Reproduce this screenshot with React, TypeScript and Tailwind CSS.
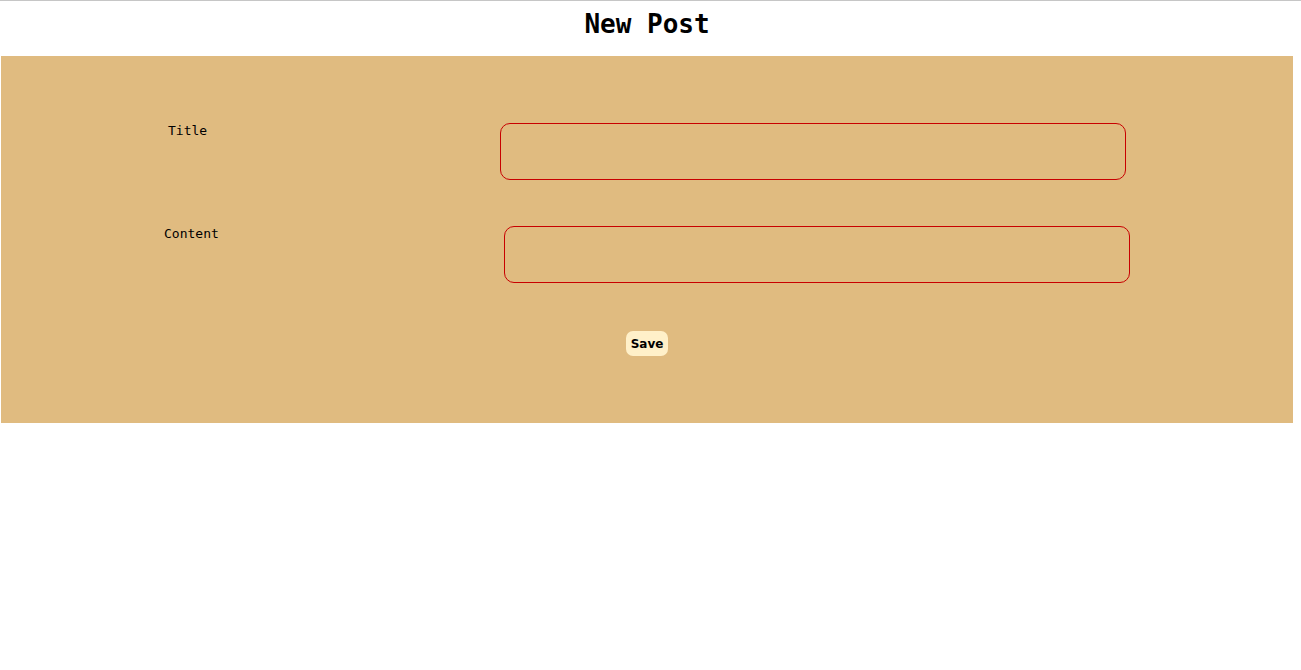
import React from "react";

export default function App() {
  return (
    <div className="min-h-[670px] bg-white border-t border-[#c6c6c6]">
      <div className="w-[1294px]">
        <h1 className="text-center text-[26px] leading-[30px] font-bold pt-[8px] h-[55px] text-black font-['DejaVu_Sans_Mono',monospace]">
          New Post
        </h1>
        <div className="ml-[1px] w-[1292px] h-[367px] bg-[#e0bb80] pt-[67px] font-['DejaVu_Sans_Mono',monospace] text-[13px] text-black">
          <div className="flex items-start">
            <div className="pl-[167px] w-[499px] leading-[15px]">Title</div>
            <div className="w-[626px] h-[57px] border border-[#c80000] rounded-[10px]" />
          </div>
          <div className="flex items-start mt-[46px]">
            <div className="pl-[163px] w-[503px] leading-[15px]">Content</div>
            <div className="w-[626px] h-[57px] border border-[#c80000] rounded-[10px]" />
          </div>
          <div className="flex justify-center mt-[48px]">
            <button className="h-[25px] px-[5px] rounded-[7px] bg-[#fff0c9] text-[12px] font-bold text-black font-['DejaVu_Sans',sans-serif]">
              Save
            </button>
          </div>
        </div>
      </div>
    </div>
  );
}
